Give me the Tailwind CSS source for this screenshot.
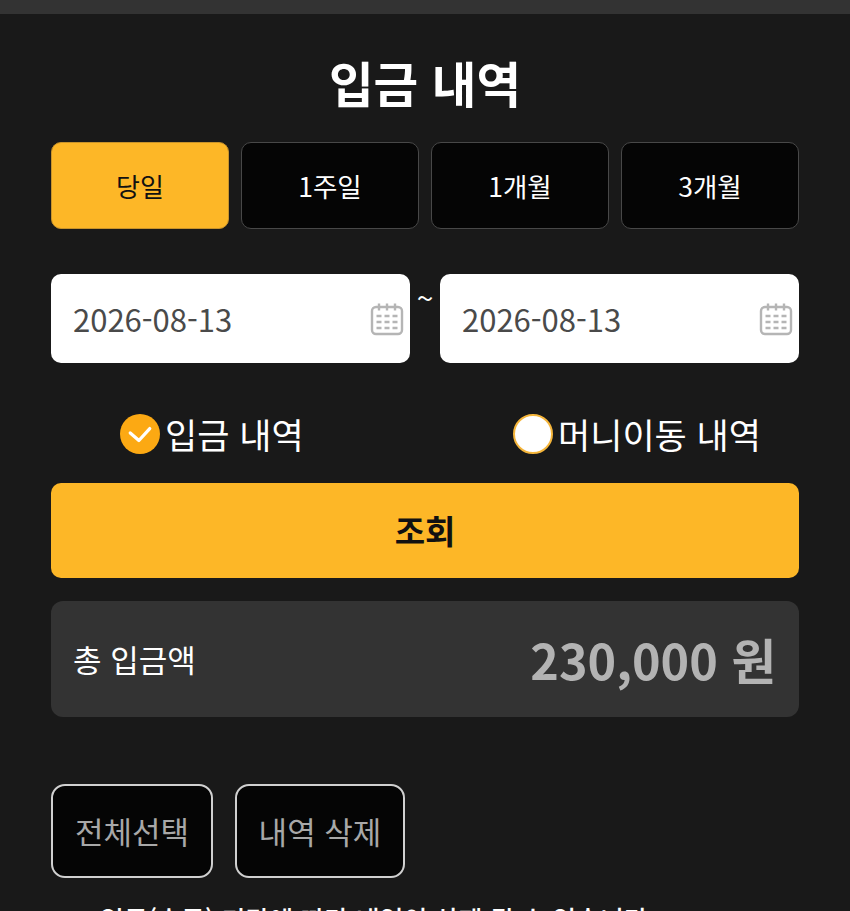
<!DOCTYPE html>
<html lang="ko"><head><meta charset="utf-8">
<script src="https://cdn.jsdelivr.net/npm/@tailwindcss/browser@4"></script>
</head>
<body class="m-0 h-[911px] w-[850px] overflow-hidden bg-[#191919] font-['Noto_Sans_CJK_KR','Noto_Sans',sans-serif]">
<div class="h-[14px] bg-[#333333]"></div>
<main class="flex flex-col px-[51px]">
  <h1 class="mt-[38px] h-[60px] text-center text-[48.500px] font-bold leading-[60px] text-white">입금 내역</h1>
  <div class="mt-[30px] grid h-[87px] grid-cols-4 gap-[12px]">
    <button class="rounded-[10px] border border-[#c9932a] bg-[#fdb727] text-[26px] text-[#111]">당일</button>
    <button class="rounded-[10px] border border-[#484848] bg-[#050505] text-[26.500px] text-white">1주일</button>
    <button class="rounded-[10px] border border-[#484848] bg-[#050505] text-[26.500px] text-white">1개월</button>
    <button class="rounded-[10px] border border-[#484848] bg-[#050505] text-[26.500px] text-white">3개월</button>
  </div>
  <div class="mt-[45px] flex h-[89px]">
    <div class="flex w-[359px] items-center justify-between rounded-[10px] bg-white pl-[22px] pr-[6px] text-[31px] text-[#4a4a4a]">
      <span class="pt-[2px]">2026-08-13</span>
      <svg class="h-[34px] w-[34px]" viewBox="0 0 34 34" fill="none" stroke="#b5b5b5" stroke-width="2.4"><rect x="2" y="5" width="30" height="27" rx="4"/><path d="M9 1.5v7M17 1.5v7M25 1.5v7"/><path d="M6.5 14h5M14.500 14h5M22.500 14h5M6.500 20h5M14.500 20h5M22.500 20h5M6.500 26h5M14.500 26h5M22.500 26h5" stroke-width="2.600"/></svg>
    </div>
    <div class="w-[30px] pt-[8px] text-center text-[30px] leading-[30px] text-white">~</div>
    <div class="flex w-[359px] items-center justify-between rounded-[10px] bg-white pl-[22px] pr-[6px] text-[31px] text-[#4a4a4a]">
      <span class="pt-[2px]">2026-08-13</span>
      <svg class="h-[34px] w-[34px]" viewBox="0 0 34 34" fill="none" stroke="#b5b5b5" stroke-width="2.4"><rect x="2" y="5" width="30" height="27" rx="4"/><path d="M9 1.5v7M17 1.5v7M25 1.5v7"/><path d="M6.5 14h5M14.500 14h5M22.500 14h5M6.500 20h5M14.500 20h5M22.500 20h5M6.500 26h5M14.500 26h5M22.500 26h5" stroke-width="2.600"/></svg>
    </div>
  </div>
  <div class="mt-[51px] flex h-[40px] items-center justify-between pl-[69px] pr-[38px] text-[35px] text-white">
    <label class="flex items-center gap-[5px]">
      <span class="flex h-[40px] w-[40px] items-center justify-center rounded-full bg-[#fca913]">
        <svg class="h-[26px] w-[26px]" viewBox="0 0 24 24" fill="none" stroke="#fff" stroke-width="3" stroke-linecap="round" stroke-linejoin="round"><path d="M3 11l8 7 10-11" /></svg>
      </span>입금 내역</label>
    <label class="flex items-center gap-[5px]">
      <span class="h-[40px] w-[40px] rounded-full border-2 border-[#f5b53a] bg-white"></span>머니이동 내역</label>
  </div>
  <button class="mt-[29px] h-[95px] rounded-[10px] bg-[#fdb727] text-[33px] font-bold text-[#111]">조회</button>
  <div class="mt-[23px] flex h-[116px] items-center justify-between rounded-[12px] bg-[#333333] pl-[22px] pr-[23px]">
    <span class="text-[31px] text-white">총 입금액</span>
    <span class="text-[48.500px] font-bold text-[#b3b3b3]">230,000 원</span>
  </div>
  <div class="mt-[67px] flex gap-[22px]">
    <button class="h-[94px] w-[162px] rounded-[14px] border-2 border-[#d0d0d0] bg-[#050505] text-[31px] text-[#a8a8a8]">전체선택</button>
    <button class="h-[94px] w-[170px] rounded-[14px] border-2 border-[#d0d0d0] bg-[#050505] text-[31px] text-[#a8a8a8]">내역 삭제</button>
  </div>
  <p class="mt-[19px] pl-[49px] text-[26px] leading-[44px] font-medium text-white">입금(송금) 기간에 따라 내역이 삭제 될 수 있습니다</p>
</main>
</body></html>
